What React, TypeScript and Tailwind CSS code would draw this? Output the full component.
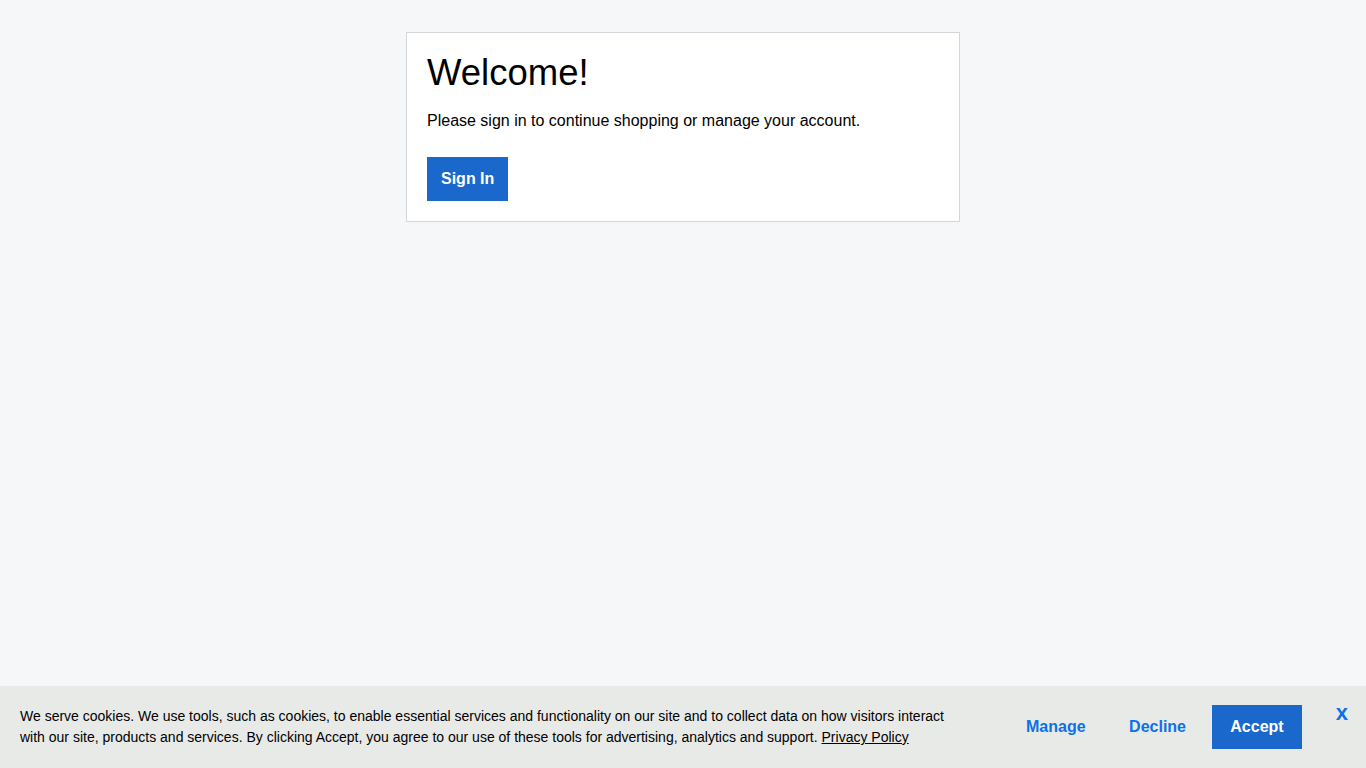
export default function App() {
  return (
    <div className="relative h-screen overflow-hidden bg-[#f5f7f9] font-['Liberation_Sans',Arial,sans-serif] text-black">
      <div className="pt-8 flex justify-center">
        <div className="w-[554px] h-[190px] bg-white border border-[#d3d6da] px-5 pt-4">
          <h1 className="text-[36.5px] leading-[47px] font-normal">Welcome!</h1>
          <p className="mt-[14px] text-base leading-[22px]">Please sign in to continue shopping or manage your account.</p>
          <button className="mt-[25px] h-11 px-[14px] bg-[#1b68cc] text-white text-base font-bold">Sign In</button>
        </div>
      </div>
      <div className="absolute bottom-0 left-0 right-0 h-[82px] bg-[#e8eae8] flex items-start pl-5">
        <p className="w-[940px] mt-5 text-sm leading-[21px] shrink-0">
          We serve cookies. We use tools, such as cookies, to enable essential services and functionality on our site and to collect data on how visitors interact with our site, products and services. By clicking Accept, you agree to our use of these tools for advertising, analytics and support. <a className="underline">Privacy Policy</a>
        </p>
        <div className="ml-[46px] mt-[19px] flex items-center">
          <button className="h-11 px-[20px] text-base font-bold text-[#0b72ea]">Manage</button>
          <button className="ml-[3.5px] h-11 px-[20px] text-base font-bold text-[#0b72ea]">Decline</button>
          <button className="ml-[5.5px] h-11 w-[90px] pl-[1px] bg-[#1b68cc] text-white text-base font-bold">Accept</button>
        </div>
        <button className="absolute right-[18px] top-[14px] text-[22px] font-bold leading-[26px] text-[#0b72ea]">x</button>
      </div>
    </div>
  );
}
